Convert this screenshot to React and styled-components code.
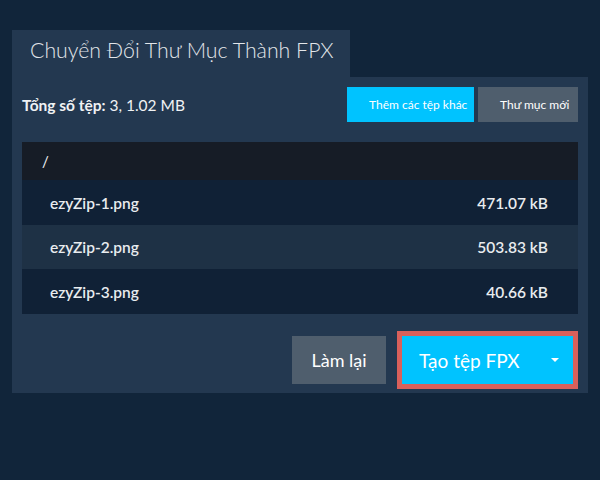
import React from "react";
import styled, { createGlobalStyle } from "styled-components";

const GlobalStyle = createGlobalStyle`
  html, body {
    margin: 0;
    padding: 0;
    background: #11253a;
    font-family: Lato, "Liberation Sans", sans-serif;
    color: #e6eaee;
  }
  button {
    box-sizing: border-box;
    white-space: nowrap;
  }
`;

const Page = styled.div`
  padding: 30px 12px 0;
  width: 576px;
`;

const Tab = styled.div`
  width: 338px;
  height: 47px;
  box-sizing: border-box;
  padding: 4px 0 0 18px;
  background: #233850;
  font-size: 21.3px;
  font-weight: 300;
  color: #e2e6ea;
  line-height: 32px;
`;

const Panel = styled.div`
  background: #233850;
  padding: 10px 10px 4px;
`;

const Toolbar = styled.div`
  display: flex;
  align-items: center;
  justify-content: space-between;
  height: 35px;
  margin-bottom: 20px;
`;

const Total = styled.div`
  font-size: 15.5px;
  color: #f0f2f4;
  b {
    font-weight: 700;
  }
`;

const Actions = styled.div`
  display: flex;
  gap: 4px;
`;

const SmallButton = styled.button`
  height: 35px;
  border: none;
  padding: 0 11px 0 22px;
  font-family: Lato, "Liberation Sans", sans-serif;
  font-size: 12px;
  color: #ffffff;
  background: ${(p) => (p.$primary ? "#00c3ff" : "#4f5e6d")};
  width: ${(p) => p.$width}px;
  text-align: left;
`;

const List = styled.div`
  display: flex;
  flex-direction: column;
`;

const Header = styled.div`
  height: 38px;
  display: flex;
  align-items: center;
  padding-left: 20px;
  background: #161c26;
  font-size: 15px;
  color: #f0f2f4;
`;

const Row = styled.div`
  height: ${(p) => p.$h}px;
  display: flex;
  align-items: center;
  justify-content: space-between;
  padding: 0 30px 0 28px;
  background: ${(p) => (p.$alt ? "#1e3145" : "#102136")};
  font-size: 15.5px;
  font-weight: 600;
  color: #e9ecef;
`;

const Footer = styled.div`
  display: flex;
  justify-content: flex-end;
  align-items: center;
  gap: 11px;
  margin-top: 17px;
`;

const ResetButton = styled.button`
  width: 94px;
  height: 48px;
  border: none;
  background: #4f5e6d;
  color: #ffffff;
  font-family: Lato, "Liberation Sans", sans-serif;
  font-size: 18px;
  font-weight: 400;
`;

const CreateButton = styled.button`
  width: 181px;
  height: 58px;
  border: 5px solid #d9605b;
  background: #00c3ff;
  color: #ffffff;
  font-family: Lato, "Liberation Sans", sans-serif;
  font-size: 19px;
  font-weight: 400;
  display: flex;
  align-items: center;
  justify-content: space-between;
  padding: 0 14px 0 17px;
`;

const Caret = styled.span`
  width: 0;
  height: 0;
  border-left: 4px solid transparent;
  border-right: 4px solid transparent;
  border-top: 4px solid #ffffff;
`;

const files = [
  { name: "ezyZip-1.png", size: "471.07 kB", h: 45 },
  { name: "ezyZip-2.png", size: "503.83 kB", h: 44 },
  { name: "ezyZip-3.png", size: "40.66 kB", h: 45 },
];

export default function App() {
  return (
    <Page>
      <GlobalStyle />
      <Tab>Chuyển Đổi Thư Mục Thành FPX</Tab>
      <Panel>
        <Toolbar>
          <Total>
            <b>Tổng số tệp:</b> 3, 1.02 MB
          </Total>
          <Actions>
            <SmallButton $primary $width={127}>
              Thêm các tệp khác
            </SmallButton>
            <SmallButton $width={100}>Thư mục mới</SmallButton>
          </Actions>
        </Toolbar>
        <List>
          <Header>/</Header>
          {files.map((f, i) => (
            <Row key={f.name} $alt={i === 1} $h={f.h}>
              <span>{f.name}</span>
              <span>{f.size}</span>
            </Row>
          ))}
        </List>
        <Footer>
          <ResetButton>Làm lại</ResetButton>
          <CreateButton>
            <span>Tạo tệp FPX</span>
            <Caret />
          </CreateButton>
        </Footer>
      </Panel>
    </Page>
  );
}
